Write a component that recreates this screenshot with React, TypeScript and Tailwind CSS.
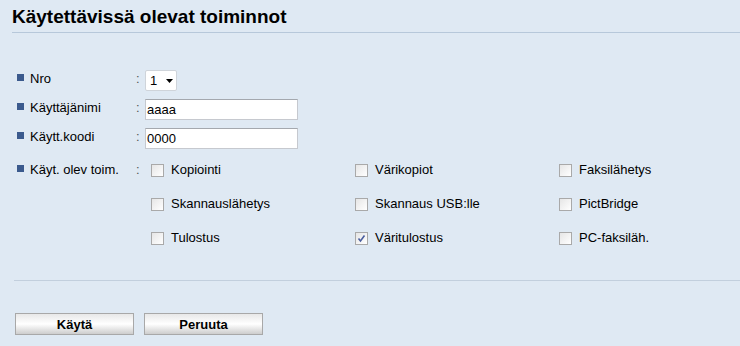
import React from "react";

const Bullet = () => <div className="mt-[3px] mr-[6px] h-[7px] w-[7px] shrink-0 bg-[#3b5a8d]" />;

function Label({ text }: { text: string }) {
  return (
    <div className="flex w-[136px] shrink-0 items-start pl-[17px] pt-[1px]">
      <Bullet />
      <span className="leading-[15px]">{text}</span>
    </div>
  );
}

const Colon = () => <span className="w-[9px] shrink-0 pt-[1px] leading-[15px] text-[#555]">:</span>;

function Check({ label, checked }: { label: string; checked?: boolean }) {
  return (
    <div className="flex h-[34px] items-start">
      <div className="mt-[3px] flex h-[13px] w-[13px] shrink-0 items-center justify-center border border-[#a9a9a9] bg-gradient-to-br from-[#e6e6e6] to-white">
        {checked && (
          <svg width="9" height="9" viewBox="0 0 9 9">
            <path d="M1.5 4.5 L3.5 7 L7.5 1.5" fill="none" stroke="#4b5f9f" strokeWidth="1.6" />
          </svg>
        )}
      </div>
      <span className="ml-[7px] mt-[1px] leading-[15px]">{label}</span>
    </div>
  );
}

export default function App() {
  return (
    <div className="h-[346px] w-[740px] overflow-hidden bg-[#dfe9f3] font-['Liberation_Sans',Arial,sans-serif] text-[13px] text-black">
      <div className="ml-[12px] border-b border-[#b7c8da] pb-[4px] pt-[6px] text-[19px] font-bold leading-[22px]">
        Käytettävissä olevat toiminnot
      </div>

      <div className="mt-[37px] flex flex-col">
        <div className="flex h-[21px] items-start">
          <Label text="Nro" />
          <Colon />
          <div className="flex h-[21px] w-[32px] items-center rounded-[2px] border border-[#cfd4da] bg-white pl-[4px]">
            <span className="leading-[15px]">1</span>
            <svg className="ml-[9px]" width="7" height="4" viewBox="0 0 7 4">
              <path d="M0 0 H7 L3.5 4 Z" fill="#000" />
            </svg>
          </div>
        </div>

        <div className="mt-[8px] flex h-[21px] items-start">
          <Label text="Käyttäjänimi" />
          <Colon />
          <div className="flex h-[21px] w-[153px] items-center border border-[#c6c9cf] border-t-[#a4a8ae] bg-white pl-[1px]">
            <span className="leading-[15px]">aaaa</span>
          </div>
        </div>

        <div className="mt-[8px] flex h-[21px] items-start">
          <Label text="Käytt.koodi" />
          <Colon />
          <div className="flex h-[21px] w-[153px] items-center border border-[#c6c9cf] border-t-[#a4a8ae] bg-white pl-[1px]">
            <span className="leading-[15px]">0000</span>
          </div>
        </div>

        <div className="mt-[12px] flex items-start">
          <Label text="Käyt. olev toim." />
          <Colon />
          <div className="ml-[6px] grid grid-cols-[204px_204px_180px]">
            <Check label="Kopiointi" />
            <Check label="Värikopiot" />
            <Check label="Faksilähetys" />
            <Check label="Skannauslähetys" />
            <Check label="Skannaus USB:lle" />
            <Check label="PictBridge" />
            <Check label="Tulostus" />
            <Check label="Väritulostus" checked />
            <Check label="PC-faksiläh." />
          </div>
        </div>
      </div>

      <div className="ml-[14px] mt-[17px] h-px bg-[#c2cfdd]" />

      <div className="ml-[15px] mt-[32px] flex gap-[10px]">
        <button className="h-[22px] w-[119px] border border-[#a8a8a8] bg-gradient-to-b from-[#e8e8e8] via-white to-[#cdcdcd] text-[13px] font-bold leading-[15px]">
          Käytä
        </button>
        <button className="h-[22px] w-[119px] border border-[#a8a8a8] bg-gradient-to-b from-[#e8e8e8] via-white to-[#cdcdcd] text-[13px] font-bold leading-[15px]">
          Peruuta
        </button>
      </div>
    </div>
  );
}
